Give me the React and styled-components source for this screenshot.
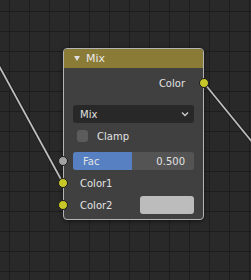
import React from 'react'
import styled, {createGlobalStyle} from 'styled-components'

const Global = createGlobalStyle`
  html, body { margin: 0; padding: 0; background: #282828; }
  * { box-sizing: border-box; }
`

const Canvas = styled.div`
  position: relative;
  width: 251px;
  height: 280px;
  overflow: hidden;
  background-color: #292929;
  background-image:
    linear-gradient(to right, #1d1d1d 1px, transparent 1px),
    linear-gradient(to bottom, #1d1d1d 1px, transparent 1px);
  background-size: 20px 20px;
  background-position: 9px 11px;
  font-family: 'DejaVu Sans', sans-serif;
  font-size: 10px;
  color: #e2e2e2;
`

const Wires = styled.svg`
  position: absolute;
  left: 0;
  top: 0;
`

const Node = styled.div`
  position: absolute;
  left: ${p => p.x}px;
  top: ${p => p.y}px;
  width: 141px;
  height: 172px;
  background: rgba(66, 66, 66, 0.92);
  border: 1px solid #b4b4b4;
  border-radius: 4px;
  box-shadow: 0 1px 4px rgba(0, 0, 0, 0.55);
  display: flex;
  flex-direction: column;
`

const Header = styled.div`
  height: 19px;
  background: rgba(140, 125, 54, 0.97);
  border-radius: 3px 3px 0 0;
  display: flex;
  align-items: center;
  padding-left: 10px;
  gap: 6px;
  color: #e8e8e8;
  font-size: 11px;
`

const Body = styled.div`
  display: flex;
  flex-direction: column;
  padding: 4px 9px 0 9px;
`

const Row = styled.div`
  position: relative;
  height: ${p => p.h || 18}px;
  margin-top: ${p => p.mt || 0}px;
  display: flex;
  align-items: center;
  justify-content: ${p => (p.right ? 'flex-end' : 'space-between')};
  padding: ${p => (p.right ? '0 9px 0 0' : p.flush ? '0' : '0 0 0 7px')};
`

const Socket = styled.span`
  position: absolute;
  top: 50%;
  ${p => (p.out ? 'right: -15px;' : 'left: -15px;')}
  width: 10px;
  height: 10px;
  margin-top: -5px;
  border-radius: 50%;
  background: ${p => p.color};
  border: 1px solid #1b1b1b;
`

const Select = styled.div`
  height: 18px;
  margin-top: 11px;
  background: #282828;
  border-radius: 3px;
  display: flex;
  align-items: center;
  justify-content: space-between;
  padding: 0 5px 0 7px;
`

const Check = styled.span`
  width: 11px;
  height: 12px;
  margin-left: -3px;
  margin-right: 9px;
  background: #5b5b5b;
  border-radius: 3px;
`

const CheckRow = styled.div`
  height: 18px;
  margin-top: 4px;
  display: flex;
  align-items: center;
  padding-left: 7px;
`

const Slider = styled.div`
  position: relative;
  flex: 1;
  height: 18px;
  background: #545454;
  border-radius: 3px;
  display: flex;
  align-items: center;
  justify-content: space-between;
  padding: 0 9px 0 10px;
`

const SliderFill = styled.div`
  position: absolute;
  left: 0;
  top: 0;
  bottom: 0;
  background: #5680c2;
  border-radius: 3px 0 0 3px;
`

const SliderText = styled.span`
  position: relative;
`

const Swatch = styled.span`
  width: 54px;
  height: 18px;
  background: #bcbcbc;
  border-radius: 3px;
`

const App = () => {
  const fac = 0.5
  return (
    <Canvas>
      <Global />
      <Wires width="251" height="280">
        <line x1="-2" y1="64" x2="63" y2="183" stroke="#1a1a1a" strokeWidth="3.5" />
        <line x1="-2" y1="64" x2="63" y2="183" stroke="#bdbdbd" strokeWidth="1.8" />
        <line x1="204" y1="83" x2="253" y2="143" stroke="#1a1a1a" strokeWidth="3.5" />
        <line x1="204" y1="83" x2="253" y2="143" stroke="#bdbdbd" strokeWidth="1.8" />
      </Wires>
      <Node x={63} y={48}>
        <Header>
          <svg width="6" height="5" viewBox="0 0 6 5">
            <path d="M0 0 L6 0 L3 5 Z" fill="#dedede" />
          </svg>
          Mix
        </Header>
        <Body>
          <Row right h={22}>
            Color
            <Socket out color="#c7c729" />
          </Row>
          <Select>
            Mix
            <svg width="8" height="6" viewBox="0 0 8 6">
              <path d="M1 1.5 L4 4.5 L7 1.5" fill="none" stroke="#cfcfcf" strokeWidth="1.3" />
            </svg>
          </Select>
          <CheckRow>
            <Check />
            Clamp
          </CheckRow>
          <Row mt={7} flush>
            <Socket color="#a1a1a1" />
            <Slider>
              <SliderFill style={{width: `${fac * 100 - 1}%`}} />
              <SliderText>Fac</SliderText>
              <SliderText>0.500</SliderText>
            </Slider>
          </Row>
          <Row mt={4}>
            <Socket color="#c7c729" />
            Color1
          </Row>
          <Row mt={4}>
            <Socket color="#c7c729" />
            Color2
            <Swatch />
          </Row>
        </Body>
      </Node>
    </Canvas>
  )
}

export default App
